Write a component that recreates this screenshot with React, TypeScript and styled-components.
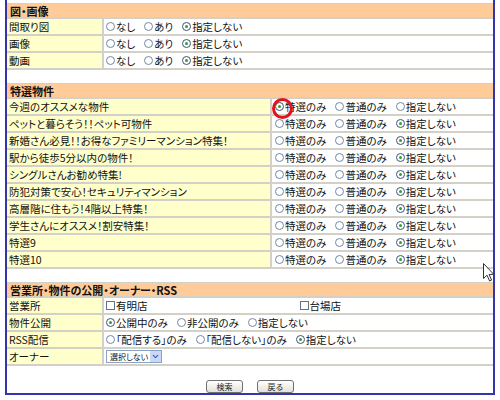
import React from "react";
import styled, { createGlobalStyle } from "styled-components";
import { ChevronDown } from "lucide-react";

const GlobalStyle = createGlobalStyle`
  html, body {
    margin: 0;
    padding: 0;
    background: #ffffff;
  }
  body {
    font-family: "Noto Sans CJK JP", "Noto Sans", sans-serif;
    font-size: 10.5px;
    font-feature-settings: "palt";
    color: #111111;
  }
`;

const LINE = "#d3d0c8";

const Frame = styled.div`
  position: relative;
  box-sizing: border-box;
  width: 490px;
  height: 395px;
  margin-left: 5px;
  padding-top: 3px;
  border: 2px solid #3434ad;
  border-top: none;
  display: flex;
  flex-direction: column;
  gap: 13px;
`;

const Section = styled.section`
  display: flex;
  flex-direction: column;
`;

const SectionTitle = styled.h2`
  margin: 0;
  box-sizing: border-box;
  height: 16px;
  padding-left: 3px;
  display: flex;
  align-items: center;
  background: #ffcc99;
  border-top: 1px solid ${LINE};
  border-bottom: 2px solid ${LINE};
  font-size: 11px;
  font-weight: 700;
`;

const Row = styled.div<{ $label: number }>`
  box-sizing: border-box;
  height: 17px;
  display: grid;
  grid-template-columns: ${({ $label }) => $label}px 1fr;
  border-bottom: 2px solid ${LINE};
`;

const Label = styled.div`
  display: flex;
  align-items: center;
  padding-left: 2px;
  background: #ffffcc;
  border-right: 2px solid ${LINE};
  white-space: nowrap;
  overflow: hidden;
`;

const Value = styled.div<{ $pad?: number }>`
  display: flex;
  align-items: center;
  gap: 9px;
  padding-left: ${({ $pad }) => $pad ?? 2}px;
  background: #ffffff;
  white-space: nowrap;
`;

const Split = styled.div`
  display: grid;
  grid-template-columns: 1fr 1fr;
  align-items: center;
  padding-left: 2px;
  background: #ffffff;
`;

const Option = styled.label`
  display: inline-flex;
  align-items: center;
  gap: 1px;
`;

const RadioMark = styled.span<{ $on?: boolean }>`
  box-sizing: border-box;
  width: 9px;
  height: 9px;
  border-radius: 50%;
  border: 1px solid ${({ $on }) => ($on ? "#3c5578" : "#7088a8")};
  background: #ffffff;
  display: inline-flex;
  align-items: center;
  justify-content: center;

  &::after {
    content: "";
    width: 3px;
    height: 3px;
    border-radius: 50%;
    background: ${({ $on }) => ($on ? "#2f9e34" : "transparent")};
  }
`;

const CheckMark = styled.span`
  box-sizing: border-box;
  width: 9px;
  height: 9px;
  border: 1px solid #5d7390;
  background: #ffffff;
`;

const Select = styled.div`
  box-sizing: border-box;
  width: 56px;
  height: 13px;
  display: flex;
  align-items: center;
  justify-content: space-between;
  padding-left: 3px;
  border: 1px solid #8aa3c4;
  font-size: 8px;
  background: #ffffff;
`;

const SelectArrow = styled.span`
  width: 11px;
  height: 11px;
  display: flex;
  align-items: center;
  justify-content: center;
  background: #c9d8f7;
  color: #3d5fa8;
`;

const ButtonBar = styled.div`
  display: flex;
  justify-content: center;
  gap: 14px;
  padding-top: 1px;
`;

const Button = styled.button`
  box-sizing: border-box;
  width: 37px;
  height: 13px;
  padding: 0;
  border: 1px solid #707070;
  border-radius: 3px;
  background: linear-gradient(#ffffff, #e4e1d8);
  font-family: inherit;
  font-size: 8px;
  line-height: 1;
  color: #222222;
`;

const Highlight = styled.span`
  position: absolute;
  left: 265px;
  top: 98px;
  width: 21px;
  height: 21px;
  box-sizing: border-box;
  border: 3px solid #e3131b;
  border-radius: 50%;
`;

const Pointer = styled.svg`
  position: absolute;
  left: 476px;
  top: 263px;
`;

function Radios({ items, on }: { items: string[]; on: number }) {
  return (
    <>
      {items.map((t, i) => (
        <Option key={t}>
          <RadioMark $on={i === on} />
          {t}
        </Option>
      ))}
    </>
  );
}

const mediaRows = ["間取り図", "画像", "動画"];

const specials = [
  "今週のオススメな物件",
  "ペットと暮らそう！！ペット可物件",
  "新婚さん必見！！お得なファミリーマンション特集！",
  "駅から徒歩5分以内の物件！",
  "シングルさんお勧め特集!",
  "防犯対策で安心！セキュリティマンション",
  "高層階に住もう！4階以上特集！",
  "学生さんにオススメ！割安特集！",
  "特選9",
  "特選10",
];

export default function App() {
  return (
    <>
      <GlobalStyle />
      <Frame>
        <Section>
          <SectionTitle>図・画像</SectionTitle>
          {mediaRows.map((name) => (
            <Row key={name} $label={97}>
              <Label>{name}</Label>
              <Value>
                <Radios items={["なし", "あり", "指定しない"]} on={2} />
              </Value>
            </Row>
          ))}
        </Section>

        <Section>
          <SectionTitle>特選物件</SectionTitle>
          {specials.map((name, i) => (
            <Row key={name} $label={265}>
              <Label>{name}</Label>
              <Value $pad={3}>
                <Radios items={["特選のみ", "普通のみ", "指定しない"]} on={i === 0 ? 0 : 2} />
              </Value>
            </Row>
          ))}
        </Section>

        <Section>
          <SectionTitle>営業所・物件の公開・オーナー・RSS</SectionTitle>
          <Row $label={97}>
            <Label>営業所</Label>
            <Split>
              <Option>
                <CheckMark />
                有明店
              </Option>
              <Option>
                <CheckMark />
                台場店
              </Option>
            </Split>
          </Row>
          <Row $label={97}>
            <Label>物件公開</Label>
            <Value>
              <Radios items={["公開中のみ", "非公開のみ", "指定しない"]} on={0} />
            </Value>
          </Row>
          <Row $label={97}>
            <Label>RSS配信</Label>
            <Value>
              <Radios items={["「配信する」のみ", "「配信しない」のみ", "指定しない"]} on={2} />
            </Value>
          </Row>
          <Row $label={97}>
            <Label>オーナー</Label>
            <Value>
              <Select>
                選択しない
                <SelectArrow>
                  <ChevronDown size={9} strokeWidth={3} />
                </SelectArrow>
              </Select>
            </Value>
          </Row>
        </Section>

        <ButtonBar>
          <Button type="button">検索</Button>
          <Button type="button">戻る</Button>
        </ButtonBar>

        <Highlight />
        <Pointer width="12" height="19" viewBox="0 0 12 19">
          <path
            d="M0.5 0.5 L0.5 15.5 L4 12.2 L6.6 18 L8.6 17.1 L6.1 11.4 L10.8 11.4 Z"
            fill="#ffffff"
            stroke="#333333"
            strokeWidth="1"
          />
        </Pointer>
      </Frame>
    </>
  );
}
